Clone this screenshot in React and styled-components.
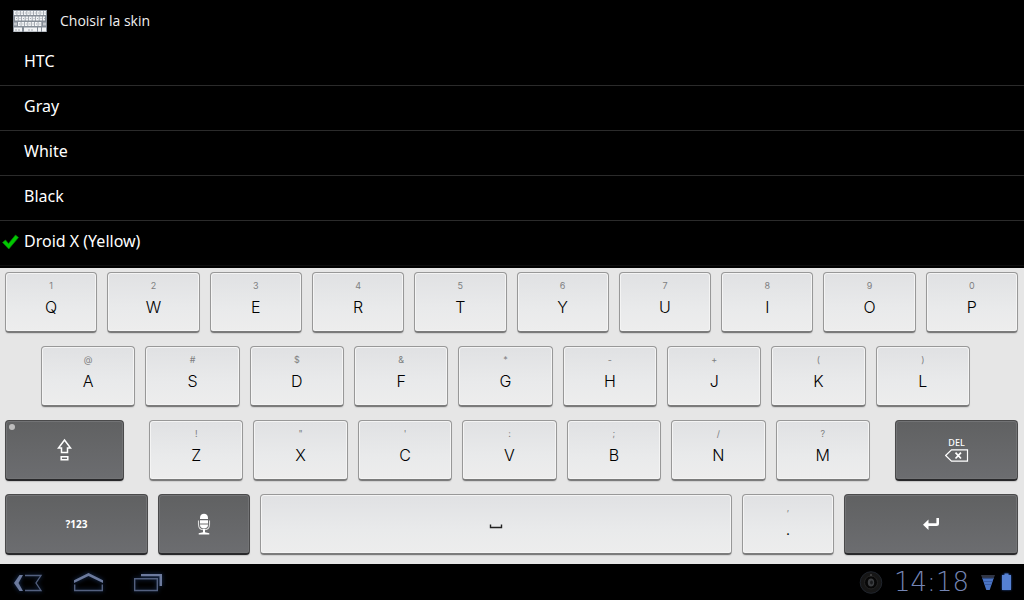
import React, { useState } from "react";
import styled, { createGlobalStyle } from "styled-components";

const GlobalStyle = createGlobalStyle`
  *, *::before, *::after { box-sizing: border-box; }
  body { margin: 0; background: #000; }
  button { font: inherit; cursor: pointer; }
  svg { display: block; flex: none; }
`;

const uiFont = `"Noto Sans", "Open Sans", sans-serif`;
const keyFont = `Inter, "DejaVu Sans", sans-serif`;

const Screen = styled.div`
  display: flex;
  flex-direction: column;
  min-height: 100vh;
  background: #000;
  color: #fff;
  font-family: ${uiFont};
`;

const TitleBar = styled.header`
  display: flex;
  align-items: center;
  gap: 13px;
  height: 41px;
  padding: 0 13px;
`;

const Title = styled.h1`
  margin: 0;
  font-size: 14px;
  line-height: 20px;
  font-weight: 400;
  font-family: "Open Sans", "Noto Sans", sans-serif;
  color: #f0f0f0;
`;

const SkinList = styled.main`
  flex: 1;
  padding-bottom: 2px;
`;

const SkinOption = styled.label`
  display: flex;
  align-items: center;
  height: 45px;
  padding-bottom: 4px;
  border-bottom: 1px solid #2b2b2b;
  font-size: 16px;
  line-height: 24px;
  cursor: pointer;

  &:last-child {
    border-bottom-color: #0e0e0e;
  }
`;

const SkinRadio = styled.input`
  appearance: none;
  width: 0;
  height: 0;
  margin: 0;
`;

const CheckSlot = styled.span`
  display: flex;
  width: 24px;
  padding-left: 2px;
`;

const Keyboard = styled.section`
  display: flex;
  flex-direction: column;
  gap: 13px;
  padding: 4px 0 9px;
  background: #e6e6e6;
`;

const KeyRow = styled.div`
  display: grid;
  grid-template-columns: ${(p) => p.$columns.map((n) => `minmax(0, ${n}fr)`).join(" ")};
  gap: ${(p) => p.$gap || 10}px;
  padding: 0 ${(p) => p.$right || 6}px 0 ${(p) => p.$left || 5}px;
`;

const KeyGroup = styled.div`
  display: grid;
  grid-template-columns: repeat(7, minmax(0, 1fr));
  gap: 10px;
`;

const Key = styled.button`
  display: flex;
  flex-direction: column;
  align-items: center;
  height: 61px;
  padding: 6px 0 0;
  border: 1px solid #989898;
  border-bottom: 2px solid #7b7b7b;
  border-radius: 4px;
  background: linear-gradient(#e0e1e3, #e9eaeb 60%, #ededed);
  box-shadow: inset 0 0 0 1px #f4f4f4, 0 1px 1px #cfcfcf;
  color: #000;
  font-family: ${keyFont};
`;

const IconKey = styled(Key)`
  justify-content: center;
  padding: 0;
`;

const DarkKey = styled(IconKey)`
  position: relative;
  border-color: #4a4a4b;
  border-bottom-color: #29292b;
  background: linear-gradient(#606162, #6c6d70);
  box-shadow: inset 0 0 0 1px #727375, 0 1px 1px #c4c4c4;
  color: #fff;
  font-family: ${uiFont};
  font-size: 10px;
  line-height: 14px;
  font-weight: ${(p) => (p.$bold ? 700 : 500)};
`;

const Hint = styled.span`
  height: 14px;
  font-size: 9px;
  line-height: 14px;
  color: #7e7f81;
`;

const Letter = styled.span`
  font-size: 16px;
  line-height: 28px;
  font-weight: 300;
`;

const LockLight = styled.span`
  position: absolute;
  top: 3px;
  left: 3px;
  width: 6px;
  height: 6px;
  border-radius: 50%;
  background: #bdbdbd;
`;

const DelText = styled.span`
  height: 12px;
  font-size: 9px;
  line-height: 12px;
`;

const SystemBar = styled.footer`
  display: flex;
  align-items: center;
  justify-content: space-between;
  height: 36px;
  padding: 0 11px 0 8px;
  background: #000;
`;

const NavGroup = styled.nav`
  display: flex;
  gap: 20px;
`;

const NavButton = styled.button`
  display: flex;
  padding: 0;
  border: 0;
  background: none;
`;

const Status = styled.div`
  display: flex;
  align-items: center;
  gap: 5px;
`;

const Clock = styled.time`
  min-width: 87px;
  text-align: center;
  font-family: "DejaVu Sans", sans-serif;
  font-size: 26px;
  line-height: 36px;
  font-weight: 200;
  color: #7485b4;
`;

const KeyboardLogo = () => (
  <svg width="34" height="22" viewBox="0 0 34 22" aria-hidden="true">
    <rect width="34" height="22" fill="#858d97" />
    <g fill="none" stroke="#f3f5f7" strokeWidth="4">
      <path d="M1 3H33" strokeDasharray="2.6 0.7" />
      <path d="M2 8.5H32" strokeDasharray="2.8 0.7" />
      <path d="M5 14H29" strokeDasharray="2.7 0.7" />
      <path d="M1 19.5H9M11 19.5H24M25 19.5H28M29 19.5H33" />
    </g>
    <path d="M1 14H4M30 14H33" stroke="#c4c8cd" strokeWidth="3" />
    <g stroke="#a3a9b1" strokeWidth="1">
      <path d="M2 3H33" strokeDasharray="1 2.3" />
      <path d="M3 8.5H32" strokeDasharray="1 2.5" />
      <path d="M6 14H29" strokeDasharray="1 2.4" />
      <path d="M2 20H8M15 20H20" strokeDasharray="2 1" />
    </g>
  </svg>
);

const CheckIcon = () => (
  <svg width="18" height="18" viewBox="0 0 18 18" aria-hidden="true">
    <path d="M0.5 10.5L3.5 8L6.5 11.5L13.5 3L16.5 5.5L6.8 17Z" fill="#00c800" stroke="#087808" strokeWidth="0.7" />
  </svg>
);

const ShiftIcon = () => (
  <svg width="16" height="24" viewBox="0 0 16 24" aria-hidden="true" fill="none" stroke="#fff" strokeWidth="1.5">
    <path d="M7.5 2L13.5 10H10.5V14.5H4.5V10H1.5Z" />
    <path d="M4.2 18.7H10.8V21.7H4.2Z" />
  </svg>
);

const MicIcon = () => (
  <svg width="14" height="22" viewBox="0 0 14 22" aria-hidden="true">
    <path d="M3 6V5C3 2.2 4.8 0.8 7 0.8S11 2.2 11 5V6ZM3 7.3H11V10.4H3ZM3 11.5H11V12C11 14.2 9.3 15.5 7 15.5S3 14.2 3 12Z" fill="#fff" />
    <path d="M3 10.9H11" stroke="#bbb" />
    <path d="M1.5 7.5V11.5C1.5 15 3.8 16.8 7 16.8S12.5 15 12.5 11.5V7.5" fill="none" stroke="#ddd" strokeWidth="1.1" />
    <path d="M6 16H8V19.3L12.3 20.2V21.5H1.7V20.2L6 19.3Z" fill="#fff" />
  </svg>
);

const DeleteIcon = () => (
  <svg width="24" height="14" viewBox="0 0 24 14" aria-hidden="true" fill="none" stroke="#fff">
    <path d="M0.6 6.5L6.5 0.8H22.5V12.2H6.5Z" strokeWidth="1.2" />
    <path d="M10.5 3.7L16 9.5M16 3.7L10.5 9.5" strokeWidth="1.7" />
  </svg>
);

const EnterIcon = () => (
  <svg width="18" height="14" viewBox="0 0 18 14" aria-hidden="true">
    <path d="M1 7.7L6.5 2.5V6.3H14.4V1H17V6.5Q17 9 14.5 9H6.5V13Z" fill="#fff" />
  </svg>
);

const SpaceIcon = () => (
  <svg width="14" height="10" viewBox="0 0 14 10" aria-hidden="true">
    <path d="M1.5 5.5V8.5H12.5V5.5" fill="none" stroke="#222" strokeWidth="1.4" />
  </svg>
);

const navGlow = { filter: "drop-shadow(0 0 2px #1b3562)" };

const BackIcon = () => (
  <svg width="40" height="28" viewBox="0 0 40 28" style={navGlow} aria-hidden="true">
    <path d="M11.5 7H15L10.5 15L15 23H11.5L6 15Z" fill="#6c7a9d" />
    <path d="M17 7.5H33L28 15L33 22.5H17" fill="none" stroke="#53607f" strokeWidth="1.3" />
  </svg>
);

const HomeIcon = () => (
  <svg width="40" height="28" viewBox="0 0 40 28" style={navGlow} aria-hidden="true">
    <path d="M6 12.3L20.5 5L35 12.3V15L20.5 8L6 15Z" fill="#6c7a9d" />
    <path d="M6.7 16.5V22.5H34.3V16.5" fill="none" stroke="#53607f" strokeWidth="1.4" />
  </svg>
);

const RecentIcon = () => (
  <svg width="40" height="28" viewBox="0 0 40 28" style={navGlow} aria-hidden="true">
    <path d="M13 6H34V18H31.5V8.3H13Z" fill="#6c7a9d" />
    <path d="M6.7 10.8H29.3V22.5H6.7Z" fill="none" stroke="#53607f" strokeWidth="1.4" />
  </svg>
);

const CameraIcon = () => (
  <svg width="24" height="24" viewBox="0 0 24 24" aria-hidden="true">
    <circle cx="12" cy="12.5" r="10.8" fill="#161616" stroke="#1f242c" />
    <circle cx="12" cy="12.5" r="6.5" fill="#070707" stroke="#242424" />
    <ellipse cx="12" cy="12.5" rx="3.2" ry="4" fill="#3c3e41" />
    <ellipse cx="12.5" cy="12.5" rx="1.4" ry="2" fill="#1b1c1e" />
    <circle cx="12" cy="5" r="0.8" fill="#666" />
  </svg>
);

const WifiIcon = () => (
  <svg width="16" height="20" viewBox="0 0 16 20" aria-hidden="true">
    <path d="M1 3H15L13.6 6.5H2.4Z" fill="#303544" />
    <path d="M2.4 6.5H13.6L9.7 18H6.3Z" fill="#4a74c4" />
    <path d="M2 6.3H14M3.5 9.5H12.5M4.5 12.5H11.5" stroke="#35569b" strokeWidth="0.8" />
  </svg>
);

const BatteryIcon = () => (
  <svg width="12" height="20" viewBox="0 0 12 20" style={{ filter: "drop-shadow(0 0 1px #2450a5)" }} aria-hidden="true">
    <path d="M3.5 1.5H7.5V3H10V18H1V3H3.5Z" fill="#5580d2" />
  </svg>
);

const skins = ["HTC", "Gray", "White", "Black", "Droid X (Yellow)"];
const topKeys = [["Q", "1"], ["W", "2"], ["E", "3"], ["R", "4"], ["T", "5"], ["Y", "6"], ["U", "7"], ["I", "8"], ["O", "9"], ["P", "0"]];
const homeKeys = [["A", "@"], ["S", "#"], ["D", "$"], ["F", "&"], ["G", "*"], ["H", "-"], ["J", "+"], ["K", "("], ["L", ")"]];
const bottomKeys = [["Z", "!"], ["X", "\""], ["C", "'"], ["V", ":"], ["B", ";"], ["N", "/"], ["M", "?"]];

const LetterKey = ({ letter, hint }) => (
  <Key type="button">
    <Hint>{hint}</Hint>
    <Letter>{letter}</Letter>
  </Key>
);

const renderKeys = (keys) => keys.map(([letter, hint]) => <LetterKey key={letter} letter={letter} hint={hint} />);

const evenColumns = (keys) => keys.map(() => 1);

export default function App() {
  const [skin, setSkin] = useState("Droid X (Yellow)");
  return (
    <Screen>
      <GlobalStyle />
      <TitleBar>
        <KeyboardLogo />
        <Title>Choisir la skin</Title>
      </TitleBar>
      <SkinList>
        {skins.map((name) => (
          <SkinOption key={name}>
            <SkinRadio type="radio" name="skin" checked={skin === name} onChange={() => setSkin(name)} />
            <CheckSlot>{skin === name && <CheckIcon />}</CheckSlot>
            {name}
          </SkinOption>
        ))}
      </SkinList>
      <Keyboard>
        <KeyRow $columns={evenColumns(topKeys)}>{renderKeys(topKeys)}</KeyRow>
        <KeyRow $columns={evenColumns(homeKeys)} $left={41} $right={54}>{renderKeys(homeKeys)}</KeyRow>
        <KeyRow $columns={[119, 721, 123]} $gap={25}>
          <DarkKey type="button" aria-label="Shift">
            <LockLight />
            <ShiftIcon />
          </DarkKey>
          <KeyGroup>{renderKeys(bottomKeys)}</KeyGroup>
          <DarkKey type="button">
            <DelText>DEL</DelText>
            <DeleteIcon />
          </DarkKey>
        </KeyRow>
        <KeyRow $columns={[143, 92, 472, 92, 174]}>
          <DarkKey type="button" $bold>?123</DarkKey>
          <DarkKey type="button" aria-label="Voice input"><MicIcon /></DarkKey>
          <IconKey type="button" aria-label="Space"><SpaceIcon /></IconKey>
          <LetterKey letter="." hint="," />
          <DarkKey type="button" aria-label="Enter"><EnterIcon /></DarkKey>
        </KeyRow>
      </Keyboard>
      <SystemBar>
        <NavGroup>
          <NavButton type="button" aria-label="Back"><BackIcon /></NavButton>
          <NavButton type="button" aria-label="Home"><HomeIcon /></NavButton>
          <NavButton type="button" aria-label="Recent apps"><RecentIcon /></NavButton>
        </NavGroup>
        <Status>
          <CameraIcon />
          <Clock>14:18</Clock>
          <WifiIcon />
          <BatteryIcon />
        </Status>
      </SystemBar>
    </Screen>
  );
}
